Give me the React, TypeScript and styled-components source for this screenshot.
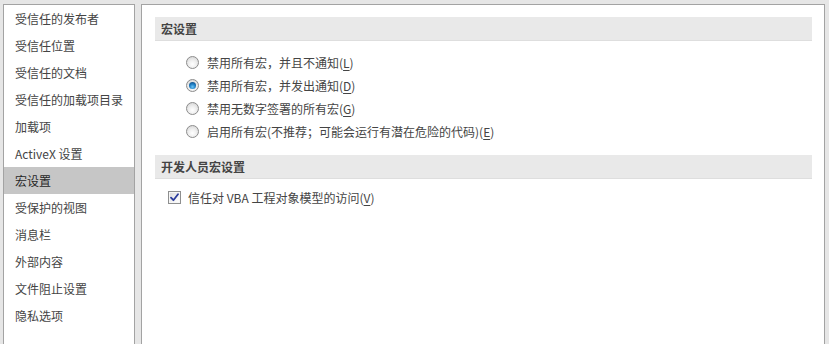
import { ReactNode } from 'react';
import styled, { createGlobalStyle } from 'styled-components';

const GlobalStyle = createGlobalStyle`
  html, body {
    margin: 0;
    padding: 0;
    background: #e6e6e6;
    overflow: hidden;
  }
`;

const Page = styled.div`
  display: flex;
  gap: 6px;
  height: 344px;
  padding: 4px 4px 0 3px;
  box-sizing: border-box;
  background: #e6e6e6;
  font-family: 'Noto Sans CJK SC', 'Microsoft YaHei', sans-serif;
  font-size: 12px;
  color: #444444;
`;

const Sidebar = styled.ul`
  list-style: none;
  margin: 0;
  padding: 0;
  width: 132px;
  box-sizing: border-box;
  background: #ffffff;
  border: 1px solid #a3a3a3;
  border-bottom: none;
  flex-shrink: 0;
`;

const NavItem = styled.li<{ $active?: boolean }>`
  height: 27px;
  line-height: 27px;
  padding-left: 11px;
  background: ${(p) => (p.$active ? '#c6c6c6' : 'transparent')};
  color: ${(p) => (p.$active ? '#262626' : '#444444')};
  white-space: nowrap;
`;

const Content = styled.div`
  flex: 1;
  box-sizing: border-box;
  background: #ffffff;
  border: 1px solid #a3a3a3;
  border-bottom: none;
  padding: 12px 12px 0 13px;
`;

const SectionHeader = styled.div`
  height: 23px;
  line-height: 23px;
  padding-left: 6px;
  background: #e9e9e9;
  border-bottom: 1px solid #dedede;
  font-weight: bold;
  color: #444444;
`;

const OptionList = styled.div<{ $indent: number; $top: number; $bottom: number }>`
  display: flex;
  flex-direction: column;
  padding: ${(p) => `${p.$top}px 0 ${p.$bottom}px ${p.$indent}px`};
`;

const Row = styled.label<{ $gap: number }>`
  display: flex;
  align-items: center;
  gap: ${(p) => p.$gap}px;
  height: 23px;
  color: #444444;
  white-space: nowrap;
`;

const Radio = styled.span<{ $checked?: boolean }>`
  position: relative;
  width: 11px;
  height: 11px;
  border-radius: 50%;
  border: 1px solid #8c8c8c;
  background: radial-gradient(circle at 50% 65%, #ffffff 0%, #f0f0f0 40%, #cfcfcf 100%);
  flex-shrink: 0;

  &::after {
    content: '';
    display: ${(p) => (p.$checked ? 'block' : 'none')};
    position: absolute;
    left: 2px;
    top: 2px;
    width: 7px;
    height: 7px;
    border-radius: 50%;
    background: radial-gradient(circle at 50% 70%, #6cc6f5 0%, #1f7fc6 45%, #0c3d6e 100%);
  }
`;

const Checkbox = styled.span`
  display: flex;
  align-items: center;
  justify-content: center;
  width: 11px;
  height: 11px;
  border: 1px solid #8e8f8f;
  background: linear-gradient(135deg, #d8d8d8 0%, #f4f4f4 60%, #ffffff 100%);
  box-shadow: inset 0 0 0 1px #f6f6f6;
  flex-shrink: 0;
`;

const Key = styled.span`
  text-decoration: underline;
  text-underline-offset: 2px;
`;

const options: { text: string; key: string; tail?: string; checked?: boolean }[] = [
  { text: '禁用所有宏，并且不通知(', key: 'L' },
  { text: '禁用所有宏，并发出通知(', key: 'D', checked: true },
  { text: '禁用无数字签署的所有宏(', key: 'G' },
  { text: '启用所有宏(不推荐；可能会运行有潜在危险的代码)(', key: 'E' },
];

const navItems = [
  '受信任的发布者',
  '受信任位置',
  '受信任的文档',
  '受信任的加载项目录',
  '加载项',
  'ActiveX 设置',
  '宏设置',
  '受保护的视图',
  '消息栏',
  '外部内容',
  '文件阻止设置',
  '隐私选项',
];

function Label({ text, k }: { text: string; k: string }): ReactNode {
  return (
    <span>
      {text}
      <Key>{k}</Key>)
    </span>
  );
}

export default function App() {
  return (
    <>
      <GlobalStyle />
      <Page>
        <Sidebar>
          {navItems.map((item) => (
            <NavItem key={item} $active={item === '宏设置'}>
              {item}
            </NavItem>
          ))}
        </Sidebar>
        <Content>
          <SectionHeader>宏设置</SectionHeader>
          <OptionList $indent={31} $top={10} $bottom={12}>
            {options.map((o) => (
              <Row key={o.key} $gap={8}>
                <Radio $checked={o.checked} />
                <Label text={o.text} k={o.key} />
              </Row>
            ))}
          </OptionList>
          <SectionHeader>开发人员宏设置</SectionHeader>
          <OptionList $indent={13} $top={7} $bottom={0}>
            <Row $gap={7}>
              <Checkbox>
                <svg width="9" height="9" viewBox="0 0 9 9">
                  <path
                    d="M1 4.6 L3.4 7.2 L8 1.2"
                    fill="none"
                    stroke="#2b3c9c"
                    strokeWidth="1.8"
                    strokeLinecap="round"
                    strokeLinejoin="round"
                  />
                </svg>
              </Checkbox>
              <Label text="信任对 VBA 工程对象模型的访问(" k="V" />
            </Row>
          </OptionList>
        </Content>
      </Page>
    </>
  );
}
